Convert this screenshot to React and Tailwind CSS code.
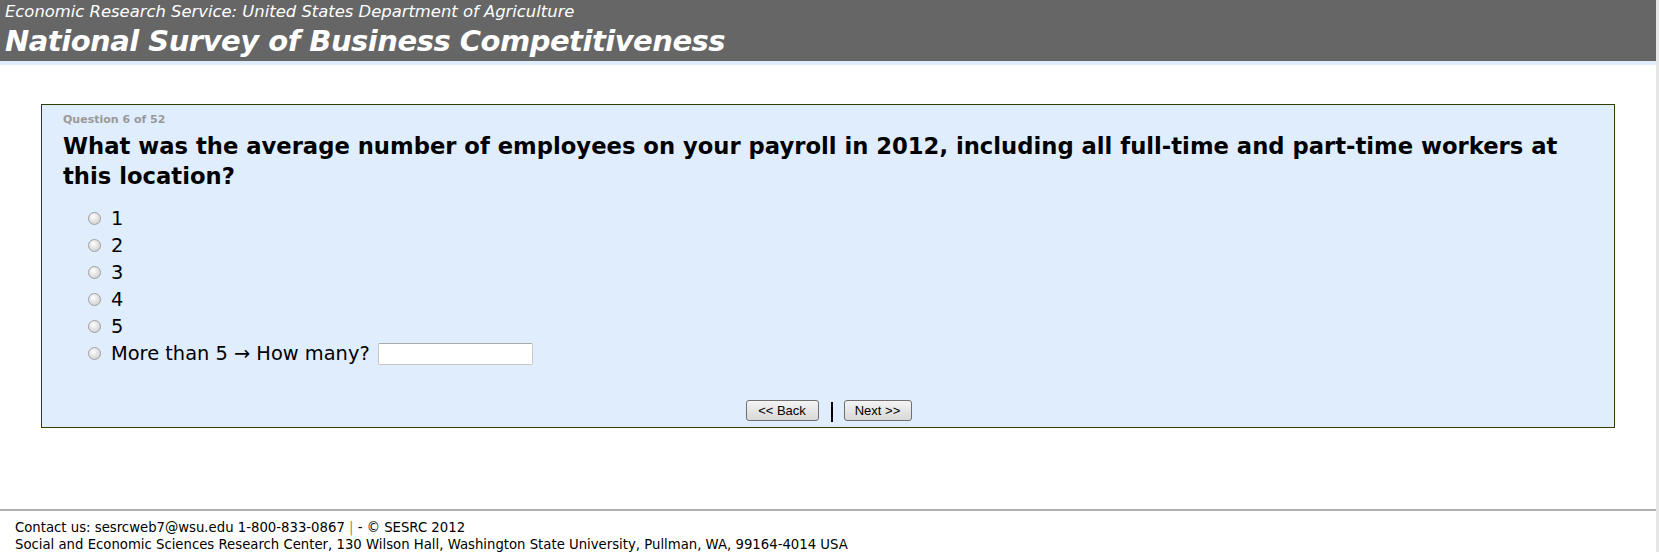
import React from "react";

function Radio() {
  return (
    <span className="inline-block w-[13px] h-[13px] rounded-full border border-[#a0a0a0] bg-[radial-gradient(circle_at_40%_35%,#ffffff_0%,#e4e4e4_45%,#c8c8c8_100%)] shrink-0" />
  );
}

function Btn({ children, className }) {
  return (
    <button
      className={
        "h-[21px] rounded-[3px] border border-[#707070] bg-[linear-gradient(#f4f4f4,#e6e6e6_50%,#d8d8d8)] text-[13px] leading-none text-black font-['Liberation_Sans',Arial,sans-serif] " +
        className
      }
    >
      {children}
    </button>
  );
}

export default function App() {
  const opts = ["1", "2", "3", "4", "5"];
  return (
    <div className="w-[1659px] h-[552px] flex bg-white overflow-hidden font-['DejaVu_Sans',Verdana,sans-serif]">
      <div className="flex-1 flex flex-col">
        <header className="h-[61px] bg-[#666666] text-white px-[5px] pt-[2px]">
          <div className="italic text-[16.4px] leading-[20px]">
            Economic Research Service: United States Department of Agriculture
          </div>
          <div className="italic font-bold text-[29px] leading-[38px] tracking-[-0.5px]">
            National Survey of Business Competitiveness
          </div>
        </header>
        <div className="h-[4px] bg-[#dfedfc]" />
        <main className="px-[41px] pt-[39px]">
          <div className="h-[324px] border border-[#2e3f00] bg-[#dfedfc] pl-[21px] pr-[20px] pt-[6px] flex flex-col">
            <div className="text-[11px] leading-[18px] font-bold text-[#999999]">Question 6 of 52</div>
            <div className="text-[22.7px] leading-[30px] font-bold text-black mt-[2px]">
              What was the average number of employees on your payroll in 2012, including all full-time and part-time workers at this location?
            </div>
            <div className="pl-[25px] pt-[14px] flex flex-col">
              {opts.map((o) => (
                <div key={o} className="flex items-center h-[27px] gap-[10px] text-[19.4px] text-black">
                  <Radio />
                  <span>{o}</span>
                </div>
              ))}
              <div className="flex items-center h-[27px] gap-[10px] text-[19.4px] text-black">
                <Radio />
                <span>More than 5 → How many?</span>
                <input className="ml-[-2px] w-[155px] h-[22px] bg-white border border-[#c8c8c8] border-t-[#a9a9a9] rounded-[2px]" />
              </div>
            </div>
            <div className="flex justify-center items-center mt-[31px]">
              <Btn className="w-[73px]">&lt;&lt; Back</Btn>
              <span className="w-[2px] h-[20px] bg-black mt-[4px] ml-[12px] mr-[11px]" />
              <Btn className="w-[68px]">Next &gt;&gt;</Btn>
            </div>
          </div>
        </main>
        <div className="flex-1" />
        <footer className="h-[43px] border-t-2 border-[#b0b0b0] px-[15px] pt-[8px] text-[13.25px] leading-[17px] text-black">
          <div>
            Contact us: sesrcweb7@wsu.edu 1-800-833-0867 <span className="text-[#7a9a4a]">|</span> - © SESRC 2012
          </div>
          <div>
            Social and Economic Sciences Research Center, 130 Wilson Hall, Washington State University, Pullman, WA, 99164-4014 USA
          </div>
        </footer>
      </div>
      <div className="w-[3px] bg-[#e6e6e6]" />
    </div>
  );
}
